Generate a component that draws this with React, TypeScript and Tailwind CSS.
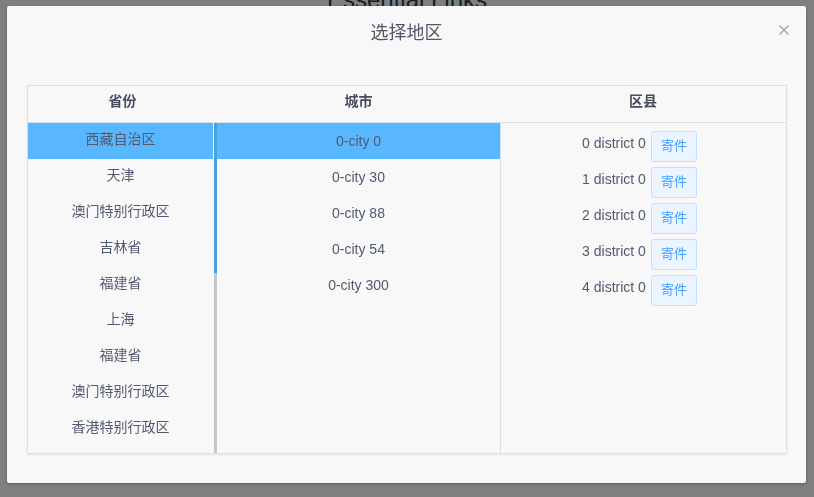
import { useState } from 'react';

const provinces = [
  '西藏自治区', '天津', '澳门特别行政区', '吉林省', '福建省', '上海', '福建省', '澳门特别行政区', '香港特别行政区',
];

const cities = ['0-city 0', '0-city 30', '0-city 88', '0-city 54', '0-city 300'];

const districts = [0, 1, 2, 3, 4].map((i) => `${i} district 0`);

export default function App() {
  const [province, setProvince] = useState(0);
  const [city, setCity] = useState(0);

  return (
    <div className="min-h-screen bg-white font-['Liberation_Sans','Noto_Sans_CJK_SC',sans-serif]">
      <h2 className="-mt-[18px] text-center text-[24px] leading-[36px] text-[#2c3e50]">Essential Links</h2>

      {/* modal */}
      <div className="fixed inset-0 bg-black/50">
        <div className="ml-[7px] mt-[6px] flex h-[477px] w-[799px] flex-col rounded-[2px] bg-[#f8f8f9] shadow-[0_1px_3px_rgba(0,0,0,0.3)]">
          <div className="relative px-5 pb-[39px] pt-[15px] text-center">
            <span className="text-[18px] leading-[24px] text-[#535864]">选择地区</span>
            <button className="absolute right-[17px] top-[19px] h-[10px] w-[10px]" aria-label="close">
              <svg viewBox="0 0 10 10" className="h-[10px] w-[10px]">
                <path d="M0.5 0.5L9.5 9.5M9.5 0.5L0.5 9.5" stroke="#9aa0a8" strokeWidth="1.1" fill="none" />
              </svg>
            </button>
          </div>

          <div className="ml-[20px] w-[760px] border border-[#d9e2ec] shadow-[0_1px_2px_rgba(0,0,0,0.08)]">
            {/* head */}
            <div className="flex h-[37px] border-b border-[#d9e2ec] text-[14px] font-bold leading-[31px] text-[#464c5b]">
              <div className="w-[189px] text-center">省份</div>
              <div className="w-[283px] text-center">城市</div>
              <div className="flex-1 text-center">区县</div>
            </div>

            {/* body */}
            <div className="flex h-[330px] text-[14px] text-[#515a6e]">
              <div className="w-[185px] overflow-hidden">
                {provinces.map((p, i) => (
                  <div
                    key={i}
                    onClick={() => setProvince(i)}
                    className={`h-[36px] cursor-pointer text-center leading-[32px] ${i === province ? 'bg-[#58b7ff]' : ''}`}
                  >
                    {p}
                  </div>
                ))}
              </div>
              <div className="flex w-[4px] flex-col pl-[1px]">
                <div className="h-[150px] bg-[#4a9fdf]" />
                <div className="flex-1 bg-[#c6c6c6]" />
              </div>

              <div className="w-[283px]">
                {cities.map((c, i) => (
                  <div
                    key={c}
                    onClick={() => setCity(i)}
                    className={`h-[36px] cursor-pointer text-center leading-[36px] ${i === city ? 'bg-[#58b7ff]' : ''}`}
                  >
                    {c}
                  </div>
                ))}
              </div>

              <div className="flex-1 border-l border-[#d9e2ec] pt-[5px]">
                {districts.map((d) => (
                  <div key={d} className="flex h-[36px] items-center justify-center pr-[8px]">
                    <span className="mb-[6px] leading-[20px]">{d}</span>
                    <button className="ml-[5px] h-[31px] w-[46px] rounded-[3px] border border-[#c0deff] bg-[#ecf5ff] text-[13px] text-[#409eff]">
                      寄件
                    </button>
                  </div>
                ))}
              </div>
            </div>
          </div>
        </div>
      </div>
    </div>
  );
}
